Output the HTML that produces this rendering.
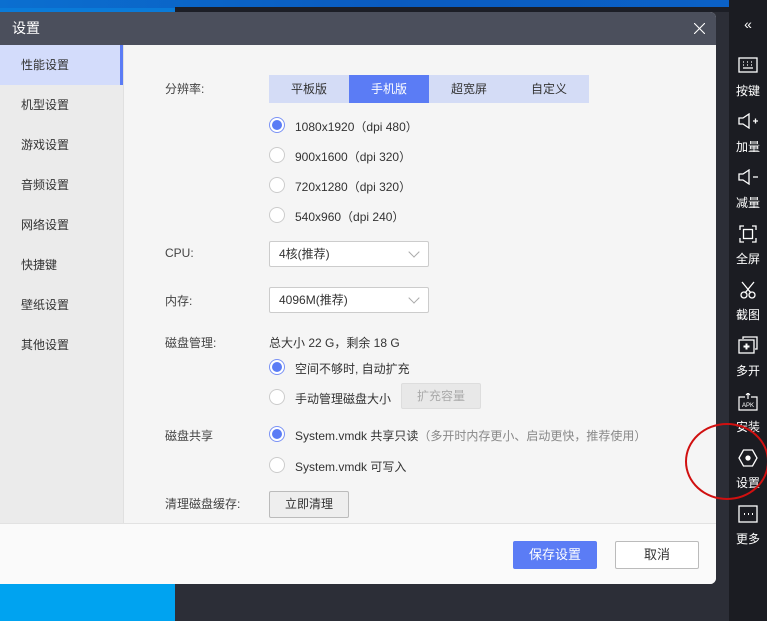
<!DOCTYPE html>
<html><head><meta charset="utf-8"><style>
*{margin:0;padding:0;box-sizing:border-box}
body{width:767px;height:621px;overflow:hidden;position:relative;background:#2c2e37;font-family:"Liberation Sans","Noto Sans CJK SC",sans-serif;font-size:12px;color:#333}
.abs{position:absolute}
.tb{position:absolute;left:729px;top:0;width:38px;height:621px;background:#1b1c22;color:#fff}
.tbi{position:absolute;left:0;width:38px;text-align:center;font-size:12px;color:#fff}
.dlg{position:absolute;left:0;top:12px;width:716px;height:572px;background:#f5f5f5;border-radius:0 6px 6px 0;overflow:hidden}
.title{height:33px;background:#4b4f5c;color:#fff;font-size:14px;line-height:33px;padding-left:12px}
.side{position:absolute;left:0;top:33px;width:124px;height:478px;background:#ebebeb;border-right:1px solid #e0e0e0}
.si{height:40px;line-height:40px;padding-left:21px;font-size:12px;color:#333}
.si.a{background:#d3dcfb;border-right:3px solid #5b7cf5}
.lbl{position:absolute;left:165px;font-size:12px;color:#444}
.rad{position:absolute;left:269px;width:16px;height:16px;border-radius:50%;border:1px solid #ccc;background:#fff}
.rad.on{border:1px solid #7b93f5;background:#fff}
.rad.on::after{content:"";position:absolute;left:2px;top:2px;width:10px;height:10px;border-radius:50%;background:#5b7cf5}
.rt{position:absolute;left:295px;font-size:12px;color:#333}
.sel{position:absolute;left:269px;width:160px;height:26px;border:1px solid #ccc;background:#fff;border-radius:2px;line-height:24px;padding-left:9px}
.sel::after{content:"";position:absolute;right:10px;top:6px;width:7px;height:7px;border-right:1px solid #aaa;border-bottom:1px solid #aaa;transform:rotate(45deg)}
.btn{position:absolute;border:1px solid #bbb;border-radius:2px;text-align:center;background:#eee}
</style></head><body>
<div class="abs" style="left:0;top:0;width:767px;height:8px;background:linear-gradient(90deg,#0b6fd0,#0a5bc0 50%,#0b62c8)"></div>
<div class="abs" style="left:175px;top:7px;width:554px;height:5px;background:#1c1e26"></div>
<div class="abs" style="left:0;top:580px;width:175px;height:41px;background:#00a3f0"></div>
<div class="abs" style="left:0;top:8px;width:175px;height:10px;background:#0a7bd8"></div>
<div class="dlg">
 <div class="title">设置<svg style="position:absolute;right:11px;top:11px" width="11" height="11" viewBox="0 0 11 11" stroke="#fff" stroke-width="1.1"><path d="M0 0L11 11M11 0L0 11"/></svg></div>
 <div class="side">
  <div class="si a">性能设置</div><div class="si">机型设置</div><div class="si">游戏设置</div><div class="si">音频设置</div><div class="si">网络设置</div><div class="si">快捷键</div><div class="si">壁纸设置</div><div class="si">其他设置</div>
 </div>
 <div class="abs" style="left:0;top:511px;width:716px;height:61px;background:#fafafa;border-top:1px solid #e2e2e2"></div>
 <div class="btn" style="left:513px;top:529px;width:84px;height:28px;background:#5b7cf5;border-color:#5b7cf5;color:#fff;line-height:26px;font-size:13px">保存设置</div>
 <div class="btn" style="left:615px;top:529px;width:84px;height:28px;background:#fff;line-height:26px;font-size:13px">取消</div>
</div>
<div class="lbl" style="top:80px">分辨率:</div>
<div class="abs" style="left:269px;top:75px;width:320px;height:28px;background:#d4dcf6;font-size:12px;line-height:28px">
 <span class="abs" style="left:0;width:80px;text-align:center">平板版</span>
 <span class="abs" style="left:80px;width:80px;text-align:center;background:#5b7cf5;color:#fff">手机版</span>
 <span class="abs" style="left:160px;width:80px;text-align:center">超宽屏</span>
 <span class="abs" style="left:240px;width:80px;text-align:center">自定义</span>
</div>
<div class="rad on" style="top:117px"></div><div class="rt" style="top:118px">1080x1920（dpi 480）</div>
<div class="rad" style="top:147px"></div><div class="rt" style="top:148px">900x1600（dpi 320）</div>
<div class="rad" style="top:177px"></div><div class="rt" style="top:178px">720x1280（dpi 320）</div>
<div class="rad" style="top:207px"></div><div class="rt" style="top:208px">540x960（dpi 240）</div>
<div class="lbl" style="top:246px">CPU:</div>
<div class="sel" style="top:241px">4核(推荐)</div>
<div class="lbl" style="top:292px">内存:</div>
<div class="sel" style="top:287px">4096M(推荐)</div>
<div class="lbl" style="top:334px">磁盘管理:</div>
<div class="abs" style="left:269px;top:334px">总大小 22 G，剩余 18 G</div>
<div class="rad on" style="top:359px"></div><div class="rt" style="top:360px">空间不够时, 自动扩充</div>
<div class="rad" style="top:389px"></div><div class="rt" style="top:390px">手动管理磁盘大小</div>
<div class="btn" style="left:401px;top:383px;width:80px;height:26px;background:#e8e8e8;border-color:#ddd;color:#aaa;line-height:24px">扩充容量</div>
<div class="lbl" style="top:427px">磁盘共享</div>
<div class="rad on" style="top:426px"></div><div class="rt" style="top:427px">System.vmdk 共享只读<span style="color:#888">（多开时内存更小、启动更快，推荐使用）</span></div>
<div class="rad" style="top:457px"></div><div class="rt" style="top:458px">System.vmdk 可写入</div>
<div class="lbl" style="top:495px">清理磁盘缓存:</div>
<div class="btn" style="left:269px;top:491px;width:80px;height:27px;line-height:25px;color:#333">立即清理</div>
<div class="tb">
 <div class="tbi" style="top:16px;font-size:14px">«</div>
 <svg class="abs" style="left:9px;top:57px" width="20" height="16" viewBox="0 0 20 16" fill="none" stroke="#fff" stroke-width="1.3"><rect x="1" y="1" width="18" height="14"/><path d="M5 5h1M9 5h1M13 5h1M5 8h1M9 8h1M13 8h1M5 11h10"/></svg>
 <div class="tbi" style="top:82px">按键</div>
 <svg class="abs" style="left:9px;top:113px" width="22" height="16" viewBox="0 0 22 16" fill="none" stroke="#fff" stroke-width="1.3"><path d="M1 5h4l6-4v14l-6-4H1z"/><path d="M15 8h5M17.5 5.5v5"/></svg>
 <div class="tbi" style="top:138px">加量</div>
 <svg class="abs" style="left:9px;top:169px" width="22" height="16" viewBox="0 0 22 16" fill="none" stroke="#fff" stroke-width="1.3"><path d="M1 5h4l6-4v14l-6-4H1z"/><path d="M15 8h5"/></svg>
 <div class="tbi" style="top:194px">减量</div>
 <svg class="abs" style="left:10px;top:225px" width="18" height="18" viewBox="0 0 18 18" fill="none" stroke="#fff" stroke-width="1.3"><path d="M1 5V1h4M13 1h4v4M17 13v4h-4M5 17H1v-4"/><rect x="4.5" y="4.5" width="9" height="9"/></svg>
 <div class="tbi" style="top:250px">全屏</div>
 <svg class="abs" style="left:10px;top:281px" width="18" height="18" viewBox="0 0 18 18" fill="none" stroke="#fff" stroke-width="1.3"><path d="M3 1l9 11M15 1L6 12"/><circle cx="5" cy="14" r="3"/><circle cx="13" cy="14" r="3"/></svg>
 <div class="tbi" style="top:306px">截图</div>
 <svg class="abs" style="left:9px;top:336px" width="20" height="18" viewBox="0 0 20 18" fill="none" stroke="#fff" stroke-width="1.3"><path d="M5 3V1h14v12h-2"/><rect x="1" y="4" width="15" height="13"/><path d="M8.5 7.5v6M5.5 10.5h6" stroke-width="2"/></svg>
 <div class="tbi" style="top:362px">多开</div>
 <svg class="abs" style="left:9px;top:393px" width="20" height="18" viewBox="0 0 20 18" fill="none" stroke="#fff" stroke-width="1.2"><path d="M7 4H1v13h18V4h-6M10 0v6M8 2l2-2 2 2"/><text x="10" y="14" font-size="6" fill="#fff" stroke="none" text-anchor="middle" font-family="Liberation Sans">APK</text></svg>
 <div class="tbi" style="top:418px">安装</div>
 <svg class="abs" style="left:9px;top:449px" width="20" height="18" viewBox="0 0 20 18" fill="none" stroke="#fff" stroke-width="1.3"><path d="M5.5 1h9l4.5 8-4.5 8h-9L1 9z"/><circle cx="10" cy="9" r="2" fill="#fff"/></svg>
 <div class="tbi" style="top:474px">设置</div>
 <svg class="abs" style="left:9px;top:505px" width="20" height="18" viewBox="0 0 20 18" fill="none" stroke="#fff" stroke-width="1.3"><rect x="1" y="1" width="18" height="16"/><path d="M6 9h1M10 9h1M14 9h1" stroke-width="2"/></svg>
 <div class="tbi" style="top:530px">更多</div>
</div>
<div class="abs" style="left:685px;top:423px;width:84px;height:77px;border:2px solid #d01010;border-radius:50%"></div>
</body></html>
